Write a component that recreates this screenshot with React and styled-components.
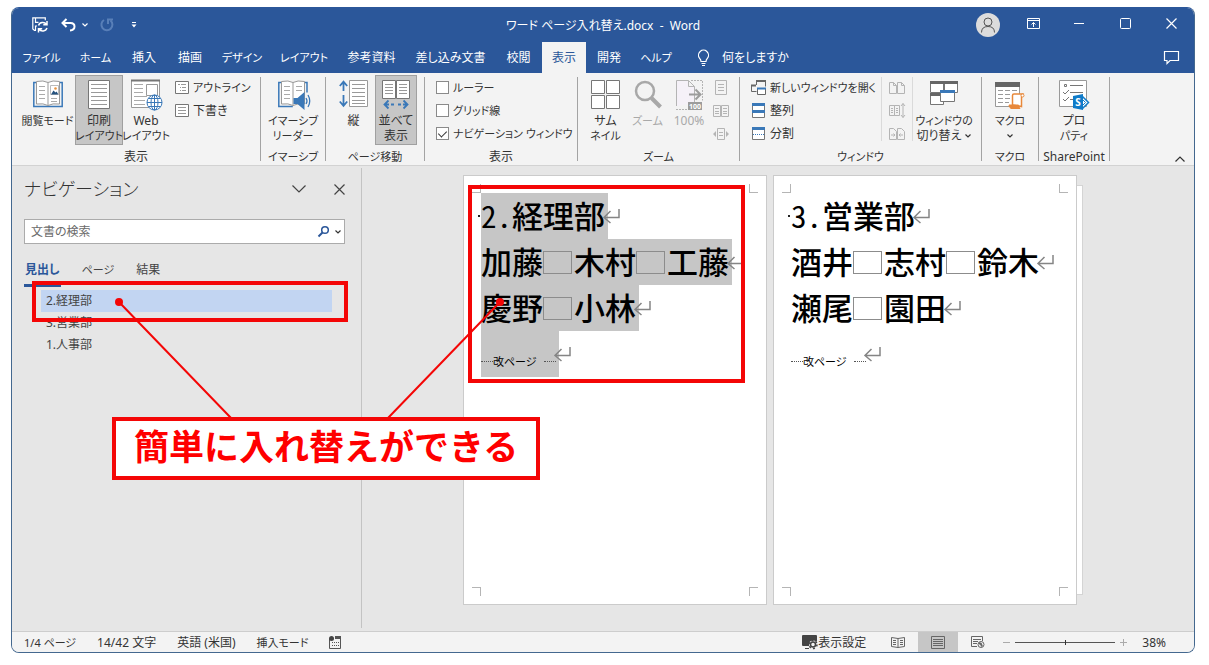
import React, { useState } from "react";
import styled, { createGlobalStyle, css } from "styled-components";

const BLUE = "#2b579a";
const ICON_BLUE = "#3a78b8";
const GRAY = "#767676";
const PALE = "#b4b4b4";
const RED = "#f40606";

const GlobalStyle = createGlobalStyle`
  * {
    box-sizing: border-box;
  }
  body {
    margin: 0;
    background: #fff;
    color: #333;
    font-family: "Noto Sans", "Noto Sans CJK JP", sans-serif;
    font-size: 12px;
    line-height: 15px;
    font-feature-settings: "palt";
  }
  button, input {
    margin: 0;
    padding: 0;
    border: 0;
    background: none;
    color: inherit;
    font: inherit;
    font-feature-settings: inherit;
  }
  svg {
    display: block;
    flex: none;
    overflow: visible;
  }
`;

const Screen = styled.div`
  position: relative;
  display: flex;
  min-height: 100vh;
  padding: 7px 14px 12px 11px;
`;

const Window = styled.div`
  flex: 1;
  min-width: 0;
  display: flex;
  flex-direction: column;
  overflow: hidden;
  border: 1px solid #44688f;
  border-top-color: ${BLUE};
  border-radius: 8px;
  background: #e6e6e6;
`;

/* katakana words are set one size smaller than kanji */
const Word = styled.span`
  font-size: ${(p) => (p.$kana ? 11 : 12)}px;
`;

const Text = ({ children }) => <Word $kana={/[ァ-ー]{3}/.test(children)}>{children}</Word>;

/* title bar */
const TitleBar = styled.header`
  display: grid;
  grid-template-columns: 1fr auto 1fr;
  align-items: center;
  height: 34px;
  background: ${BLUE};
  color: #fff;
`;

const Title = styled.h1`
  margin: 0;
  font-size: 12px;
  font-weight: 400;
  white-space: pre;
`;

const QuickAccess = styled.div`
  display: flex;
  align-items: center;
  padding-left: 20px;
`;

const QuickButton = styled.button`
  margin-left: ${(p) => p.$gap || 0}px;
  opacity: ${(p) => (p.disabled ? 0.4 : 1)};
`;

const WindowButtons = styled.div`
  display: flex;
  justify-content: flex-end;
  align-items: center;
  color: #fff;
`;

const WindowButton = styled.button`
  display: flex;
  justify-content: center;
  width: 46px;
`;

const Avatar = styled.button`
  width: 24px;
  height: 24px;
  margin-right: 10px;
  border-radius: 50%;
  background: #dcdcdc;
`;

/* tab row */
const TabRow = styled.nav`
  display: flex;
  align-items: center;
  height: 31px;
  padding-left: 1px;
  background: ${BLUE};
  color: #fff;
`;

const Tab = styled.button`
  width: ${(p) => p.$w}px;
  height: 31px;
  white-space: nowrap;
  ${(p) =>
    p.$active &&
    css`
      background: #f3f3f3;
      color: ${BLUE};
    `}
`;

const TellMe = styled.button`
  display: flex;
  align-items: center;
  gap: 12px;
  padding-left: 17px;
  white-space: nowrap;
`;

const CommentButton = styled.button`
  margin-left: auto;
  padding-right: 15px;
`;

/* ribbon */
const Ribbon = styled.section`
  display: flex;
  padding-top: 2px;
  border-bottom: 1px solid #d2d2d2;
  background: #f3f3f3;
`;

const Group = styled.div`
  display: flex;
  flex-direction: column;
  width: ${(p) => p.$w}px;
`;

const GroupBody = styled.div`
  display: flex;
  height: 70px;
  padding-left: ${(p) => p.$pad || 0}px;
  justify-content: ${(p) => (p.$center ? "center" : "flex-start")};
`;

const GroupLabel = styled.div`
  margin-top: 4px;
  line-height: 16px;
  text-align: center;
  white-space: nowrap;
`;

const Divider = styled.div`
  width: 1px;
  margin: 2px 0 4px;
  background: ${(p) => (p.$light ? "#dadada" : "#a3a3a3")};
`;

const BigButtonBox = styled.button`
  display: flex;
  flex-direction: column;
  align-items: center;
  justify-content: flex-start;
  width: ${(p) => p.$w}px;
  height: 70px;
  padding-top: 4px;
  border: 1px solid ${(p) => (p.$active ? "#a0a0a0" : "transparent")};
  background: ${(p) => (p.$active ? "#c6c6c6" : "none")};
  color: ${(p) => (p.disabled ? "#a9a9a9" : "#333")};
  white-space: nowrap;
`;

const IconSlot = styled.span`
  height: 33px;
`;

const CaptionLine = styled.span`
  display: flex;
  align-items: center;
  justify-content: center;
  gap: 4px;
  height: 15px;
`;

const SmallColumn = styled.div`
  display: flex;
  flex-direction: column;
  padding: 1px 0 0 ${(p) => p.$pad || 0}px;
`;

const SmallButton = styled.button`
  display: flex;
  align-items: center;
  gap: 4px;
  height: 23px;
  white-space: nowrap;
`;

const CheckRow = styled.label`
  display: flex;
  align-items: center;
  gap: 4px;
  height: 23px;
  white-space: nowrap;
`;

const CheckBox = styled.input`
  appearance: none;
  display: flex;
  justify-content: center;
  width: 13px;
  height: 13px;
  border: 1px solid #8a8a8a;
  background: #fff;
  &:checked::after {
    content: "";
    width: 4px;
    height: 7px;
    margin-top: 1px;
    border: solid #333;
    border-width: 0 1px 1px 0;
    transform: rotate(45deg);
  }
`;

const Collapse = styled.button`
  align-self: flex-end;
  margin: 0 9px 3px auto;
`;

/* navigation pane */
const Body = styled.main`
  flex: 1;
  display: flex;
`;

const NavPane = styled.aside`
  width: 350px;
  margin: 2px 0 3px;
  padding: 8px 16px 0 12px;
  border-right: 1px solid #c3c3c3;
`;

const NavHeader = styled.div`
  display: flex;
  align-items: center;
  gap: 28px;
  height: 26px;
`;

const NavTitle = styled.h2`
  flex: 1;
  margin: 0;
  font-size: 18px;
  font-weight: 300;
  line-height: 28px;
`;

const SearchBox = styled.label`
  display: flex;
  align-items: center;
  gap: 6px;
  height: 25px;
  margin-top: 17px;
  padding: 0 3px 0 6px;
  border: 1px solid #ababab;
  background: #fff;
`;

const SearchInput = styled.input`
  flex: 1;
  min-width: 0;
  outline: none;
  &::placeholder {
    color: #6a6a6a;
    opacity: 1;
  }
`;

const NavTabs = styled.div`
  display: flex;
  gap: 20px;
  margin-top: 16px;
`;

const NavTab = styled.button`
  height: 27px;
  padding: 0 1px 6px;
  border-bottom: 3px solid ${(p) => (p.$active ? BLUE : "transparent")};
  color: ${(p) => (p.$active ? BLUE : "#444")};
  font-weight: ${(p) => (p.$active ? 700 : 400)};
  white-space: nowrap;
`;

const HeadingList = styled.ul`
  margin: 3px 0 0;
  padding: 0 13px 0 17px;
  list-style: none;
`;

const Heading = styled.li`
  height: 22px;
  padding-left: 5px;
  line-height: 22px;
  color: #444;
  background: ${(p) => (p.$active ? "#c2d5f2" : "none")};
`;

/* document */
const Canvas = styled.section`
  flex: 1;
  display: flex;
  justify-content: center;
  align-items: flex-start;
  padding: 9px 10px 0 0;
`;

const Sheet = styled.article`
  display: flex;
  flex-direction: column;
  width: 304px;
  height: 430px;
  margin-right: ${(p) => (p.$last ? 0 : 6)}px;
  padding: 8px;
  border: 1px solid #cbcbcb;
  background: #fff;
`;

const SheetEdge = styled.div`
  width: 6px;
  height: 410px;
  margin-top: 10px;
  border: 1px solid #d4d4d4;
  border-left: 0;
  background: #fff;
`;

const CropRow = styled.div`
  display: flex;
  justify-content: space-between;
`;

const Crop = styled.i`
  width: 9px;
  height: 9px;
  border: 0 solid #b5b5b5;
  border-width: ${(p) => p.$sides};
`;

const SheetText = styled.div`
  flex: 1;
  padding-left: 9px;
  color: #000;
  font-family: "Noto Sans CJK JP", sans-serif;
  font-size: 31px;
  font-weight: 500;
  font-feature-settings: normal;
`;

const Line = styled.p`
  display: flex;
  align-items: center;
  height: 46px;
  margin: 0;
  line-height: 44px;
  white-space: nowrap;
`;

const Run = styled.span`
  display: flex;
  height: 46px;
  padding: 0 3px 0 0;
  background: ${(p) => (p.$selected ? "#c6c6c6" : "none")};
  & + svg {
    margin-left: -5px;
  }
`;

const Half = styled.span`
  font-weight: 400;
  font-feature-settings: "hwid";
`;

const Dot = styled.i`
  width: 2px;
  height: 2px;
  margin-left: -3px;
  margin-right: 1px;
  background: #222;
`;

const Space = styled.i`
  align-self: center;
  width: 29px;
  height: 23px;
  margin-right: 2px;
  border: 1px solid #8c8c8c;
`;

const BreakText = styled.span`
  display: flex;
  align-items: center;
  padding-top: 14px;
  font-size: 11px;
  font-weight: 400;
  font-feature-settings: "palt";
  line-height: 16px;
`;

const Dashes = styled.i`
  width: 12px;
  margin-left: ${(p) => p.$before || 0}px;
  border-top: 1px dotted #555;
`;

/* status bar */
const StatusBar = styled.footer`
  display: flex;
  align-items: center;
  gap: 21px;
  height: 21px;
  padding-left: 12px;
  border-top: 1px solid #cdcdcd;
  background: #f3f3f3;
  white-space: nowrap;
`;

const StatusRight = styled.div`
  display: flex;
  align-items: center;
  margin-left: auto;
  padding-right: 28px;
`;

const DisplaySettings = styled.button`
  display: flex;
  align-items: center;
  margin-right: 12px;
`;

const ViewButton = styled.button`
  display: flex;
  align-items: center;
  justify-content: center;
  width: 40px;
  height: 20px;
  background: ${(p) => (p.$active ? "#c6c6c6" : "none")};
`;

const ZoomStep = styled.button`
  width: 7px;
  margin: 0 5px;
`;

const ZoomSlider = styled.input`
  appearance: none;
  width: 100px;
  height: 7px;
  background: linear-gradient(#555, #555) center / 100% 1px no-repeat;
  &::-webkit-slider-thumb {
    appearance: none;
    width: 1px;
    height: 5px;
    background: #333;
  }
`;

const ZoomValue = styled.span`
  margin-left: 10px;
`;

/* annotation layer */
const Notes = styled.div`
  position: absolute;
  inset: 0;
  pointer-events: none;
`;

const Frame = styled.div`
  position: absolute;
  left: ${(p) => p.$x}px;
  top: ${(p) => p.$y}px;
  width: ${(p) => p.$w}px;
  height: ${(p) => p.$h}px;
  border: 4px solid ${RED};
`;

const Pointers = styled.svg`
  position: absolute;
  left: 0;
  top: 0;
`;

const Callout = styled.p`
  position: absolute;
  left: 112px;
  top: 417px;
  margin: 0;
  padding: 0 18px 8px;
  border: 4px solid ${RED};
  background: #fff;
  color: #ff0000;
  font-family: "Noto Sans CJK JP", sans-serif;
  font-size: 35px;
  font-weight: 700;
  font-feature-settings: normal;
  line-height: 47px;
  white-space: nowrap;
`;

const Svg = ({ w = 30, h = 30, c = GRAY, children }) => (
  <svg width={w} height={h} viewBox={`0 0 ${w} ${h}`} fill="none" stroke={c} aria-hidden="true">
    {children}
  </svg>
);

const Caret = ({ w = 6, c = "#333" }) => (
  <Svg w={w} h={w / 2 + 1} c={c}>
    <path d={`M.5.5 L${w / 2} ${w / 2} L${w - 0.5}.5`} strokeWidth="1.2" />
  </Svg>
);

const Cross = ({ c }) => (
  <Svg w={11} h={11} c={c}>
    <path d="M.5.5l10 10M10.5.5l-10 10" strokeWidth="1.2" />
  </Svg>
);

const ReadIcon = () => (
  <Svg>
    <path d="M3 2.500H.8v24h28.400v-24H27" stroke={ICON_BLUE} strokeWidth="1.5" />
    <path d="M3.500 1.500q7-1.500 11.500 1 4.500-2.500 11.500-1v22.500q-7-1-11.500 1.500-4.500-2.500-11.500-1.500zM15 2.500v23" fill="#fff" stroke="#999" />
    <path d="M6 6.500h6M6 10.500h6M6 14.500h6M6 18.500h6M18 18.500h6M18 21.500h6" stroke="#aaa" />
    <path d="M17.500 5.500h8v9h-8z" fill="#fff" stroke="#bbb" />
    <path d="M18 14.500l2.500-4 2 2 1-1 2 3z" fill="#24527f" stroke="none" />
    <circle cx="22.500" cy="8.500" r="1.300" fill="#e7923f" stroke="none" />
  </Svg>
);

const PrintIcon = () => (
  <Svg w={22}>
    <path d="M.5.500h21v28H.5z" fill="#fff" />
    <path d="M3 4.500h16M3 8.500h16M3 12.500h16M3 16.500h16M3 20.500h16M3 24.500h16" stroke="#999" />
  </Svg>
);

const WebIcon = () => (
  <Svg>
    <path d="M.5.500h28v27H.5z" fill="#fff" stroke="#999" />
    <path d="M0 .500h29" strokeWidth="2" />
    <path d="M3 4.500h9M3 8.500h9M3 12.500h9M3 16.500h13M3 20.500h11M3 24.500h11" stroke="#aaa" />
    <path d="M15.500 4.500h11v11h-11z" stroke="#999" />
    <g stroke={ICON_BLUE}>
      <circle cx="23.500" cy="22.500" r="7.500" fill="#fff" />
      <ellipse cx="23.500" cy="22.500" rx="3.500" ry="7.500" />
      <path d="M23.500 15v15M16 22.500h15M17.500 18.500h12M17.500 26.500h12" />
    </g>
  </Svg>
);

const ListIcon = ({ outline }) => (
  <Svg w={14} h={13}>
    <path d="M.5.500h13v12H.5z" fill="#fff" />
    <path
      d={outline ? "M3 3.500h2M6 3.500h5M5 6.500h1M7 6.500h4M5 9.500h1M7 9.500h4" : "M3 3.500h8M3 6.500h8M3 9.500h8"}
      stroke="#999"
    />
  </Svg>
);

const ReaderIcon = () => (
  <Svg>
    <path d="M3 2.500H.8v24h14M26 2.500h3v10" stroke={ICON_BLUE} strokeWidth="1.5" />
    <path d="M3.500 1.500q7-1.500 11.500 1 4.500-2.500 11.500-1v22.500q-7-1-11.500 1.500-4.500-2.500-11.500-1.500zM15 2.500v23" fill="#fff" stroke="#999" />
    <path d="M6 6.500h6M6 10.500h6M6 14.500h6M6 18.500h6M18 6.500h6M18 10.500h6" stroke="#aaa" />
    <path d="M15.500 18h4l7-6v18l-7-6h-4z" fill={ICON_BLUE} stroke="none" />
    <path d="M28 18q2 3 0 6M30 15q3.500 6 0 12" stroke={ICON_BLUE} strokeWidth="1.3" />
  </Svg>
);

const VerticalIcon = () => (
  <Svg>
    <path d="M10.500.500h18v26h-18z" fill="#fff" stroke="#999" />
    <path d="M13 4.500h13M13 8.500h13M13 12.500h13M13 16.500h13M13 20.500h13M13 23.500h13" stroke="#999" />
    <path
      d="M4.500 2v9M.8 6l3.700-4.300L8.200 6M4.500 15v10M.8 21.500l3.700 4.300 3.700-4.300"
      stroke={ICON_BLUE}
      strokeWidth="1.8"
    />
  </Svg>
);

const SideIcon = () => (
  <Svg w={28}>
    <path d="M.5.500h13v18H.5zM14.500.500h13v18h-13z" fill="#fff" />
    <path d="M3 4.500h8M3 7.500h8M3 10.500h8M3 13.500h8M17 4.500h8M17 7.500h8M17 10.500h8M17 13.500h8" stroke="#999" />
    <path
      d="M2.500 24.500H7M9 24.500h3M6.500 20.500l-4 4 4 4M16 24.500h3M21 24.500h4.500M21.500 20.500l4 4-4 4"
      stroke={ICON_BLUE}
      strokeWidth="1.8"
    />
  </Svg>
);

const ThumbsIcon = () => (
  <Svg>
    <path d="M.5.500h13v13H.5zM15.500.500h13v13h-13zM.5 15.500h13v13H.5zM15.500 15.500h13v13h-13z" fill="#fff" />
  </Svg>
);

const LensIcon = () => (
  <Svg w={28} c="#a8a8a8">
    <circle cx="11" cy="11" r="9" strokeWidth="2.5" />
    <path d="M17.500 18l9 9" strokeWidth="4" />
  </Svg>
);

const HundredIcon = () => (
  <Svg w={28} c={PALE}>
    <path d="M1.500 26V.500h12l6 6V23M13.500.500v6h6" fill="#f5f1f8" />
    <path d="M16 .500h11.500v20M1 29.500h12" strokeDasharray="2 1" />
    <path d="M14 14.500h11M20.500 9.500l5 5-5 5" stroke="#9c9c9c" strokeWidth="2" />
    <rect x="13" y="22" width="14" height="8" fill="#9c9c9c" stroke="none" />
    <text x="20" y="29" fontSize="7" fontWeight="700" textAnchor="middle" fill="#fff" stroke="none">
      100
    </text>
  </Svg>
);

const PageIcon = () => (
  <Svg w={16} h={15} c={PALE}>
    <path d="M2.500.500h11v14h-11zM5 4.500h6M5 7.500h6M5 10.500h6" />
  </Svg>
);

const TwoPagesIcon = () => (
  <Svg w={16} h={12} c={PALE}>
    <path d="M.5.500h7v11h-7zM8.500.500h7v11h-7zM2 3.500h4M2 6.500h4M2 8.500h4M10 3.500h4M10 6.500h4M10 8.500h4" />
  </Svg>
);

const PageWidthIcon = () => (
  <Svg w={16} h={12} c={PALE}>
    <path d="M4.500.500h7v11h-7zM6 4.500h4M6 7.500h4" />
    <path d="M3 3v6L0 6zM13 3v6l3-3z" fill={PALE} stroke="none" />
  </Svg>
);

const NewWindowIcon = () => (
  <Svg w={15} h={15} c="#666">
    <path d="M5.500 5V.500h9v6M5 5.500H.5v6h5" />
    <path d="M5 1h10M0 5.500h5" strokeWidth="2" />
    <path d="M6.500 8.500h8v6h-8z" fill="#fff" />
    <path d="M6 8.500h9" stroke={ICON_BLUE} strokeWidth="2" />
  </Svg>
);

const ArrangeIcon = () => (
  <Svg w={15} h={15}>
    <path d="M1.500.500h12v14h-12z" fill="#fff" />
    <path d="M1 1.500h13M1 8.500h13" stroke={ICON_BLUE} strokeWidth="3" />
  </Svg>
);

const SplitIcon = () => (
  <Svg w={15} h={13}>
    <path d="M1.500.500h12v12h-12z" fill="#fff" />
    <path d="M1 1.500h13" stroke={ICON_BLUE} strokeWidth="3" />
    <path d="M2 7.500h11" stroke={ICON_BLUE} strokeDasharray="1 1" />
  </Svg>
);

const CompareIcon = () => (
  <Svg w={16} h={12} c={PALE}>
    <path d="M.5.500h4l3 3v8h-7zM8.500.500h4l3 3v8h-7zM4.500.500v3h3M12.500.500v3h3" />
  </Svg>
);

const SyncIcon = () => (
  <Svg w={16} h={16} c={PALE}>
    <path d="M.5 2.500h5v10h-5zM5.500 2.500h5v10h-5zM2 5.500h2M2 7.500h2M2 9.500h2M7 5.500h2M7 7.500h2M7 9.500h2M14 .500v14M12 3l2-2.500L16 3M12 12l2 2.500 2-2.500" />
  </Svg>
);

const ResetIcon = () => (
  <Svg w={16} h={12} c={PALE}>
    <path d="M.5.500h4l3 3v8h-7zM8.500.500h4l3 3v8h-7zM2 7h4M4.500 5.500L6 7 4.500 8.500M14 7h-4M11.500 5.500L10 7l1.500 1.500" />
  </Svg>
);

const SwitchIcon = () => (
  <Svg w={28}>
    <path d="M.5 1.500h13v11H.5zM14.500 1.500h13v11h-13zM.5 13.500h13v11H.5z" fill="#fff" />
    <path d="M0 2.500h28M0 14.500h14" stroke="#666" strokeWidth="3" />
    <path d="M10.500 10.500h14v11h-14z" fill="#fff" />
    <path d="M10 11.500h15" stroke={ICON_BLUE} strokeWidth="3" />
  </Svg>
);

const MacroIcon = () => (
  <Svg>
    <path d="M.5 2.500h24v24H.5z" fill="#fff" stroke="#999" />
    <path d="M0 4.500h25" stroke="#666" strokeWidth="5" />
    <path d="M3 10.500h5M10 10.500h5M17 10.500h5M3 14.500h5M10 14.500h5M3 18.500h5M10 18.500h5M3 22.500h5M10 22.500h4" stroke="#999" />
    <path d="M17.500 25V15.500q0-1.500 1.500-1.500h8.500q-1 1-1 3v9.500z" fill="#fff" stroke="#e8883a" strokeWidth="1.5" />
    <path d="M14 25h9.500q0 2 1.500 3.500H16q-2-1-2-3.500z" fill="#e8883a" stroke="#e8883a" />
    <circle cx="27.500" cy="15.500" r="1.5" stroke="#e8883a" fill="#fff" />
  </Svg>
);

const PropertyIcon = () => (
  <Svg>
    <path d="M.5.500h27v26H.5z" fill="#fff" stroke="#999" />
    <path d="M5.500 4.500h2v2h-2zM11 5.500h13M11 12.500h13M11 19.500h4M4 12l2 2 4-4M4 19l2 2 4-4" />
    <path d="M24 17l5.500 5.500-5.500 5.500-3-5.500z" fill="#fff" stroke="#0f7bc9" strokeWidth="1.5" />
    <path d="M24 20l2.500 2.500L24 25" stroke="#0f7bc9" />
    <path d="M14 16l10-2v16l-10-2z" fill="#0f7bc9" stroke="none" />
    <text x="19" y="26" fontSize="10" fontWeight="700" textAnchor="middle" fill="#fff" stroke="none">
      S
    </text>
  </Svg>
);

const ReturnMark = () => (
  <Svg w={17} h={15} c="#858585">
    <path d="M16 0v8.500H1M7.500 2L1 8.500l6.500 5.500" strokeWidth="1.5" />
  </Svg>
);

const TABS = [
  ["ファイル", 57],
  ["ホーム", 51],
  ["挿入", 46],
  ["描画", 46],
  ["デザイン", 58],
  ["レイアウト", 66],
  ["参考資料", 69],
  ["差し込み文書", 89],
  ["校閲", 47],
  ["表示", 44],
  ["開発", 46],
  ["ヘルプ", 48],
];

const PAGES = [
  { selected: true, number: "2.", dept: "経理部", rows: [["加藤", "木村", "工藤"], ["慶野", "小林"]] },
  { selected: false, number: "3.", dept: "営業部", rows: [["酒井", "志村", "鈴木"], ["瀬尾", "園田"]] },
];

const HEADINGS = ["2.経理部", "3.営業部", "1.人事部"];

const TitleArea = () => (
  <TitleBar>
    <QuickAccess>
      <QuickButton aria-label="上書き保存">
        <Svg w={16} h={16} c="#fff">
          <path d="M4 13.500H2.500L.8 12V.800h12.500v2.500M3.500 .800v4.500h3M3.500 13.500V9h1.500" strokeWidth="1.2" />
          <path
            d="M6.500 8.500a4.500 4.500 0 0 1 8-1M15 4v3.700h-3.700M15 11a4.500 4.500 0 0 1-8 1M6.500 15.500v-3.700h3.700"
            strokeWidth="1.5"
          />
        </Svg>
      </QuickButton>
      <QuickButton $gap={13} aria-label="元に戻す">
        <Svg w={15} h={14} c="#fff">
          <path d="M5.500 1L1.500 5l4 4M2 5h7.500q4 0 4 3.500t-4.500 4" strokeWidth="2" />
        </Svg>
      </QuickButton>
      <QuickButton $gap={6} aria-label="元に戻す一覧">
        <Caret c="#fff" />
      </QuickButton>
      <QuickButton $gap={12} disabled aria-label="やり直し">
        <Svg w={14} h={14} c="#9dbbe6">
          <path d="M4 2a5.500 5.500 0 1 0 6.500.500M8 6V1.500h5" strokeWidth="2" />
        </Svg>
      </QuickButton>
      <QuickButton $gap={17} aria-label="カスタマイズ">
        <Svg w={6} h={6} c="#fff">
          <path d="M1 .500h4" />
          <path d="M.5 2.500h5L3 5.500z" fill="#fff" stroke="none" />
        </Svg>
      </QuickButton>
    </QuickAccess>
    <Title>{"ワード ページ入れ替え.docx  -  Word"}</Title>
    <WindowButtons>
      <Avatar aria-label="アカウント">
        <Svg w={24} h={24} c="#555">
          <circle cx="12" cy="9" r="4" />
          <path d="M5.500 19.500q0-6 6.500-6t6.500 6" />
        </Svg>
      </Avatar>
      <WindowButton aria-label="リボンの表示オプション">
        <Svg w={13} h={15} c="#fff">
          <path d="M.5.500h12v10H.5zM.5 2.500h12M6.500 9V4.500M4.500 6.500l2-2 2 2" />
        </Svg>
      </WindowButton>
      <WindowButton aria-label="最小化">
        <Svg w={10} h={11} c="#fff">
          <path d="M0 3.500h10" />
        </Svg>
      </WindowButton>
      <WindowButton aria-label="最大化">
        <Svg w={11} h={15} c="#fff">
          <rect x="0.5" y="0.5" width="10" height="10" rx="1" />
        </Svg>
      </WindowButton>
      <WindowButton aria-label="閉じる">
        <Svg w={11} h={15} c="#fff">
          <path d="M.5.500l10 10M10.500.500l-10 10" strokeWidth="1.2" />
        </Svg>
      </WindowButton>
    </WindowButtons>
  </TitleBar>
);

const BigButton = ({ w, icon, lines, active, disabled, menu }) => (
  <BigButtonBox $w={w} $active={active} disabled={disabled}>
    <IconSlot>{icon}</IconSlot>
    {lines.map((line, i) => (
      <CaptionLine key={i}>
        {line && <Text>{line}</Text>}
        {menu && i === lines.length - 1 && <Caret />}
      </CaptionLine>
    ))}
  </BigButtonBox>
);

const RibbonArea = () => {
  const [checks, setChecks] = useState({ ルーラー: false, グリッド線: false, "ナビゲーション ウィンドウ": true });

  return (
    <Ribbon>
      <Group $w={248}>
        <GroupBody $pad={8}>
          <BigButton w={55} icon={<ReadIcon />} lines={["閲覧モード"]} />
          <BigButton w={48} icon={<PrintIcon />} lines={["印刷", "レイアウト"]} active />
          <BigButton w={46} icon={<WebIcon />} lines={["Web", "レイアウト"]} />
          <SmallColumn $pad={6}>
            <SmallButton>
              <ListIcon outline />
              <Text>アウトライン</Text>
            </SmallButton>
            <SmallButton>
              <ListIcon />
              <Text>下書き</Text>
            </SmallButton>
          </SmallColumn>
        </GroupBody>
        <GroupLabel>表示</GroupLabel>
      </Group>
      <Divider />
      <Group $w={64}>
        <GroupBody $center>
          <BigButton w={60} icon={<ReaderIcon />} lines={["イマーシブ", "リーダー"]} />
        </GroupBody>
        <GroupLabel><Text>イマーシブ</Text></GroupLabel>
      </Group>
      <Divider />
      <Group $w={98}>
        <GroupBody $pad={6}>
          <BigButton w={43} icon={<VerticalIcon />} lines={["縦"]} />
          <BigButton w={42} icon={<SideIcon />} lines={["並べて", "表示"]} active />
        </GroupBody>
        <GroupLabel><Text>ページ移動</Text></GroupLabel>
      </Group>
      <Divider />
      <Group $w={152}>
        <GroupBody $pad={11}>
          <SmallColumn>
            {Object.keys(checks).map((name) => (
              <CheckRow key={name}>
                <CheckBox
                  type="checkbox"
                  checked={checks[name]}
                  onChange={(e) => setChecks({ ...checks, [name]: e.target.checked })}
                />
                <Text>{name}</Text>
              </CheckRow>
            ))}
          </SmallColumn>
        </GroupBody>
        <GroupLabel>表示</GroupLabel>
      </Group>
      <Divider />
      <Group $w={161}>
        <GroupBody $pad={6}>
          <BigButton w={43} icon={<ThumbsIcon />} lines={["サム", "ネイル"]} />
          <BigButton w={41} icon={<LensIcon />} lines={["ズーム"]} disabled />
          <BigButton w={42} icon={<HundredIcon />} lines={["100%"]} disabled />
          <SmallColumn $pad={3}>
            <SmallButton disabled aria-label="1 ページ"><PageIcon /></SmallButton>
            <SmallButton disabled aria-label="複数ページ"><TwoPagesIcon /></SmallButton>
            <SmallButton disabled aria-label="ページ幅"><PageWidthIcon /></SmallButton>
          </SmallColumn>
        </GroupBody>
        <GroupLabel><Text>ズーム</Text></GroupLabel>
      </Group>
      <Divider />
      <Group $w={241}>
        <GroupBody $pad={11}>
          <Group $w={130}>
            <SmallColumn>
              <SmallButton>
                <NewWindowIcon />
                <Text>新しいウィンドウを開く</Text>
              </SmallButton>
              <SmallButton>
                <ArrangeIcon />
                <Text>整列</Text>
              </SmallButton>
              <SmallButton>
                <SplitIcon />
                <Text>分割</Text>
              </SmallButton>
            </SmallColumn>
          </Group>
          <Divider $light />
          <SmallColumn $pad={7}>
            <SmallButton disabled aria-label="並べて比較"><CompareIcon /></SmallButton>
            <SmallButton disabled aria-label="同時にスクロール"><SyncIcon /></SmallButton>
            <SmallButton disabled aria-label="位置を元に戻す"><ResetIcon /></SmallButton>
          </SmallColumn>
          <SmallColumn $pad={7} />
          <Divider $light />
          <BigButton w={62} icon={<SwitchIcon />} lines={["ウィンドウの", "切り替え"]} menu />
        </GroupBody>
        <GroupLabel><Text>ウィンドウ</Text></GroupLabel>
      </Group>
      <Divider />
      <Group $w={56}>
        <GroupBody $center>
          <BigButton w={50} icon={<MacroIcon />} lines={["マクロ", ""]} menu />
        </GroupBody>
        <GroupLabel><Text>マクロ</Text></GroupLabel>
      </Group>
      <Divider />
      <Group $w={70}>
        <GroupBody $center>
          <BigButton w={50} icon={<PropertyIcon />} lines={["プロ", "パティ"]} />
        </GroupBody>
        <GroupLabel>SharePoint</GroupLabel>
      </Group>
      <Divider />
      <Collapse aria-label="リボンを折りたたむ">
        <Svg w={10} h={6} c="#333">
          <path d="M.5 5.500L5 1l4.500 4.500" strokeWidth="1.2" />
        </Svg>
      </Collapse>
    </Ribbon>
  );
};

const Navigation = () => (
  <NavPane>
    <NavHeader>
      <NavTitle>ナビゲーション</NavTitle>
      <button aria-label="オプション"><Caret w={14} c="#444" /></button>
      <button aria-label="閉じる"><Cross c="#444" /></button>
    </NavHeader>
    <SearchBox>
      <SearchInput type="text" placeholder="文書の検索" aria-label="文書の検索" />
      <Svg w={11} h={11} c={BLUE}>
        <circle cx="7" cy="4" r="3.3" strokeWidth="1.5" />
        <path d="M4.500 6.500L.5 10.500" strokeWidth="2" />
      </Svg>
      <Caret />
    </SearchBox>
    <NavTabs>
      <NavTab $active>見出し</NavTab>
      <NavTab><Text>ページ</Text></NavTab>
      <NavTab>結果</NavTab>
    </NavTabs>
    <HeadingList>
      {HEADINGS.map((text, i) => (
        <Heading key={text} $active={i === 0}>{text}</Heading>
      ))}
    </HeadingList>
  </NavPane>
);

const DocPage = ({ page, last }) => (
  <Sheet $last={last}>
    <CropRow>
      <Crop $sides="0 1px 1px 0" />
      <Crop $sides="0 0 1px 1px" />
    </CropRow>
    <SheetText>
      <Line>
        <Dot />
        <Run $selected={page.selected}><Half>{page.number}</Half>{page.dept}</Run>
        <ReturnMark />
      </Line>
      {page.rows.map((names) => (
        <Line key={names[0]}>
          <Run $selected={page.selected}>
            {names.map((name, i) => (
              <React.Fragment key={name}>
                {i > 0 && <Space />}
                {name}
              </React.Fragment>
            ))}
          </Run>
          <ReturnMark />
        </Line>
      ))}
      <Line>
        <Run $selected={page.selected}>
          <BreakText>
            <Dashes />
            改ページ
            <Dashes $before={7} />
          </BreakText>
        </Run>
        <ReturnMark />
      </Line>
    </SheetText>
    <CropRow>
      <Crop $sides="1px 1px 0 0" />
      <Crop $sides="1px 0 0 1px" />
    </CropRow>
  </Sheet>
);

const Status = () => {
  const [zoom, setZoom] = useState(50);

  return (
    <StatusBar>
      <Text>1/4 ページ</Text>
      <span>14/42 文字</span>
      <span>英語 (米国)</span>
      <Text>挿入モード</Text>
      <Svg w={13} h={13} c="#555">
        <path d="M.5 3v9.500h11V3" />
        <path d="M6 1.500h6" strokeWidth="3" />
        <circle cx="2.500" cy="2.500" r="2.5" fill="#444" stroke="none" />
        <path d="M3 6.500h7M3 9.500h7" strokeDasharray="1 1" />
      </Svg>
      <StatusRight>
        <DisplaySettings>
          <Svg w={16} h={14} c="#444">
            <path d="M1 0h13q1 0 1 1v5l-6 5H1q-1 0-1-1V1q0-1 1-1z" fill="#444" stroke="none" />
            <path d="M3 13.500h4" />
            <circle cx="11" cy="9.500" r="4" fill="#f3f3f3" stroke="none" />
            <circle cx="11" cy="9.500" r="2.5" strokeWidth="1.5" />
            <circle cx="11" cy="9.500" r="4" strokeWidth="1.5" strokeDasharray="2 2.2" />
          </Svg>
          表示設定
        </DisplaySettings>
        <ViewButton aria-label="閲覧モード">
          <Svg w={14} h={12} c="#666">
            <path d="M.5 1.500l6.500 1 6.500-1v9l-6.500 1-6.500-1zM7 2v9.500M2 4.500h3M2 6.500h3M2 8.500h3M9 4.500h3M9 6.500h3M9 8.500h3" />
          </Svg>
        </ViewButton>
        <ViewButton $active aria-label="印刷レイアウト">
          <Svg w={14} h={13} c="#666">
            <path d="M.5.500h13v12H.5zM2 3.500h10M2 5.500h10M2 7.500h10M2 9.500h10" />
          </Svg>
        </ViewButton>
        <ViewButton aria-label="Web レイアウト">
          <Svg w={14} h={12} c="#666">
            <path d="M6 10.500H.5V.500h11V5M2 3.500h8M2 5.500h5M2 7.500h4" />
            <circle cx="10" cy="8.500" r="3" />
            <path d="M8 7l2 1 1 2.500" strokeWidth="2" />
          </Svg>
        </ViewButton>
        <ZoomStep aria-label="縮小">
          <Svg w={7} h={7} c="#aaa"><path d="M0 3.500h7" /></Svg>
        </ZoomStep>
        <ZoomSlider type="range" aria-label="ズーム" value={zoom} onChange={(e) => setZoom(Number(e.target.value))} />
        <ZoomStep aria-label="拡大">
          <Svg w={7} h={7} c="#aaa"><path d="M0 3.500h7M3.500 0v7" /></Svg>
        </ZoomStep>
        <ZoomValue>38%</ZoomValue>
      </StatusRight>
    </StatusBar>
  );
};

const App = () => {
  return (
    <Screen>
      <GlobalStyle />
      <Window>
        <TitleArea />
        <TabRow>
          {TABS.map(([name, w]) => (
            <Tab key={name} $w={w} $active={name === "表示"}>
              <Text>{name}</Text>
            </Tab>
          ))}
          <TellMe>
            <Svg w={13} h={16} c="#fff">
              <path d="M4 11.500q0-2-1.500-3.300a5 5 0 1 1 8 0Q9 9.500 9 11.500zM4.500 13.500h4M5 15.500h3" strokeWidth="1.2" />
            </Svg>
            何をしますか
          </TellMe>
          <CommentButton aria-label="コメント">
            <Svg w={15} h={13} c="#fff">
              <path d="M.5.500h14v9H6l-3 3v-3H.5z" strokeWidth="1.2" />
            </Svg>
          </CommentButton>
        </TabRow>
        <RibbonArea />
        <Body>
          <Navigation />
          <Canvas>
            {PAGES.map((page, i) => (
              <DocPage key={page.dept} page={page} last={i === PAGES.length - 1} />
            ))}
            <SheetEdge />
          </Canvas>
        </Body>
        <Status />
      </Window>
      <Notes>
        <Frame $x={32} $y={281} $w={316} $h={41} />
        <Frame $x={468} $y={185} $w={277} $h={198} />
        <Pointers width="600" height="430" fill={RED} stroke={RED} strokeWidth="2">
          <path d="M119 302L231 418M500 302L388 418" />
          <circle cx="119" cy="302" r="3" />
          <circle cx="500" cy="302" r="3" />
        </Pointers>
        <Callout>簡単に入れ替えができる</Callout>
      </Notes>
    </Screen>
  );
};

export default App;
